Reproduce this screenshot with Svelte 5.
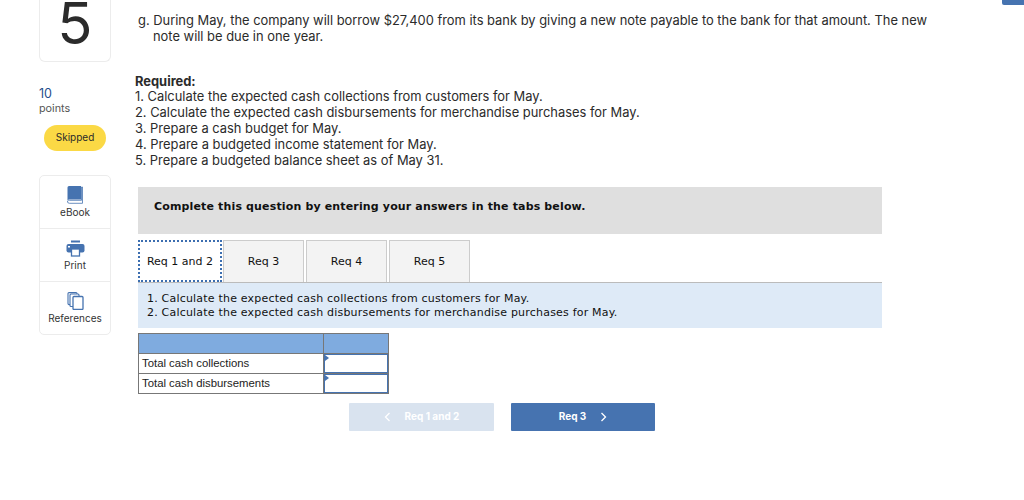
<script>
  const steps = [
    'Calculate the expected cash collections from customers for May.',
    'Calculate the expected cash disbursements for merchandise purchases for May.',
    'Prepare a cash budget for May.',
    'Prepare a budgeted income statement for May.',
    'Prepare a budgeted balance sheet as of May 31.'
  ];
  const tabs = ['Req 1 and 2', 'Req 3', 'Req 4', 'Req 5'];
</script>

<div class="page">
  <div class="corner"></div>
  <aside class="side">
    <div class="num">5</div>
    <div class="pts"><b>10</b><span>points</span></div>
    <div class="skip">Skipped</div>
    <div class="tools">
      <div class="tool">
        <svg width="18" height="18" viewBox="0 0 18 18"><path d="M1.500 1.500A1.500 1.500 0 0 1 3 0h12v13.500H3.500a2 2 0 0 0-2 1z" fill="#4673b0"/><path d="M1.500 15A2 2 0 0 1 3.500 14.300H15.500V1h1V17.300H3.500A2 2 0 0 1 1.500 15z" fill="none" stroke="#4673b0" stroke-width="0.800"/></svg>
        <span>eBook</span>
      </div>
      <div class="tool">
        <svg width="19" height="18" viewBox="0 0 19 18"><rect x="5" y="1.500" width="9" height="2" fill="#4673b0"/><rect x="0.500" y="5" width="18" height="8.500" rx="2" fill="#4673b0"/><rect x="5.500" y="10" width="8" height="7" fill="#fff" stroke="#4673b0" stroke-width="1.300"/><rect x="2" y="7" width="2" height="1.500" fill="#fff"/></svg>
        <span>Print</span>
      </div>
      <div class="tool">
        <svg width="17" height="18" viewBox="0 0 17 18" fill="#fff" stroke="#4673b0" stroke-width="1.100"><rect x="1" y="0.600" width="9" height="12" rx="1"/><rect x="3" y="2" width="9" height="12.500" rx="1"/><rect x="6" y="4.500" width="10" height="13" rx="1" stroke-width="1.300"/></svg>
        <span>References</span>
      </div>
    </div>
  </aside>

  <main class="main">
    <p class="g">g. During May, the company will borrow $27,400 from its bank by giving a new note payable to the bank for that amount. The new<br /><span class="ind">note will be due in one year.</span></p>
    <div class="req">
      <strong>Required:</strong>
      {#each steps as s, i}
        <div>{i + 1}. {s}</div>
      {/each}
    </div>

    <div class="work">
      <div class="banner">Complete this question by entering your answers in the tabs below.</div>
      <div class="tabs">
        {#each tabs as t, i}
          <div class="tab" class:active={i === 0}>{t}</div>
        {/each}
      </div>
      <div class="instr">
        <div>1. Calculate the expected cash collections from customers for May.</div>
        <div>2. Calculate the expected cash disbursements for merchandise purchases for May.</div>
      </div>
      <table>
        <tbody>
          <tr class="head"><td class="c1"></td><td class="c2"></td></tr>
          <tr><td class="c1">Total cash collections</td><td class="c2 input"></td></tr>
          <tr><td class="c1">Total cash disbursements</td><td class="c2 input"></td></tr>
        </tbody>
      </table>
      <div class="nav">
        <div class="btn off">
          <svg width="7" height="10" viewBox="0 0 7 10"><path d="M5.500 1L1.500 5l4 4" fill="none" stroke="#fff" stroke-width="1.300"/></svg>
          <span>Req 1 and 2</span>
        </div>
        <div class="btn on">
          <span>Req 3</span>
          <svg width="7" height="10" viewBox="0 0 7 10"><path d="M1.500 1l4 4-4 4" fill="none" stroke="#fff" stroke-width="1.300"/></svg>
        </div>
      </div>
    </div>
  </main>
</div>

<style>
  :global(body) { margin: 0; background: #fff; }
  .page {
    position: relative;
    display: flex;
    width: 1024px;
    height: 500px;
    overflow: hidden;
    font-family: "Inter", "Open Sans", sans-serif;
    color: #2b2b2b;
  }
  .corner {
    position: absolute;
    top: 0;
    right: 0;
    width: 22px;
    height: 5px;
    background: #4673b0;
    border-bottom-left-radius: 2px;
  }
  .side {
    width: 72px;
    margin-left: 39px;
    flex: none;
    display: flex;
    flex-direction: column;
  }
  .num {
    height: 62px;
    box-sizing: border-box;
    border: 1px solid #ececec;
    border-top: 0;
    border-radius: 0 0 6px 6px;
    text-align: center;
    font-size: 58px;
    font-weight: 400;
    line-height: 46px;
    color: #2b2b2b;
  }
  .pts { margin-top: 24px; display: flex; flex-direction: column; font-size: 10.800px; line-height: 15px; }
  .pts b { font-weight: 400; font-size: 12.500px; color: #1f4e8c; }
  .pts span { color: #555; }
  .skip {
    margin: 9px 0 0 5px;
    width: 62px;
    height: 26px;
    border-radius: 13px;
    background: #fbd945;
    font-size: 10px;
    line-height: 25px;
    text-align: center;
  }
  .tools {
    margin-top: 24px;
    border: 1px solid #ececec;
    border-radius: 5px;
    height: 160px;
    box-sizing: border-box;
    display: flex;
    flex-direction: column;
  }
  .tool {
    flex: 1;
    display: flex;
    flex-direction: column;
    align-items: center;
    gap: 2px;
    padding-top: 10px;
    font-size: 10px;
    line-height: 13px;
    color: #333;
  }
  .tool + .tool { border-top: 1px solid #ececec; }
  .main { margin-left: 24px; flex: 1; font-size: 12.900px; line-height: 15.800px; }
  .g { margin: 13px 0 0 3px; }
  .ind { margin-left: 15px; }
  .req { margin-top: 29px; }
  .req strong { font-weight: 700; display: block; }
  .work { margin: 18.600px 0 0 3px; width: 744px; font-family: "DejaVu Sans", sans-serif; color: #111; }
  .banner {
    height: 47px;
    box-sizing: border-box;
    padding: 12px 16px 0;
    background: #dfdfdf;
    font-size: 11px;
    letter-spacing: 0.150px;
    font-weight: 700;
    line-height: 15px;
  }
  .tabs { display: flex; gap: 2px; margin-top: 6px; height: 42px; border-bottom: 1px solid #bbb; }
  .tab {
    width: 81px;
    height: 42px;
    box-sizing: border-box;
    border: 1px solid #ccc;
    border-bottom: 0;
    background: #f3f3f3;
    text-align: center;
    font-size: 11px;
    line-height: 42px;
  }
  .tab.active {
    width: 84px;
    margin-right: -1px;
    background: #fff;
    border: 2px dotted #3c6eb0;
    line-height: 40px;
  }
  .instr {
    height: 45px;
    box-sizing: border-box;
    padding: 9px 9px 0;
    background: #deeaf7;
    font-size: 11px;
    letter-spacing: 0.200px;
    line-height: 14px;
  }
  table {
    margin-top: 5px;
    width: 251px;
    border-collapse: collapse;
    table-layout: fixed;
    font-family: "Liberation Sans", sans-serif;
    font-size: 11.350px;
    color: #222;
  }
  td { border: 1px solid #777; height: 19px; padding: 0 3px; line-height: 13px; }
  .c1 { width: 178px; }
  .head td { background: #7fabdf; }
  .input { position: relative; box-shadow: inset 0 0 0 1px #4673b0; }
  .input::before {
    content: "";
    position: absolute;
    left: 1px;
    top: 1px;
    border-left: 4px solid #4673b0;
    border-top: 3px solid transparent;
    border-bottom: 3px solid transparent;
  }
  .nav { display: flex; gap: 17px; margin: 9px 0 0 211px; }
  .btn {
    width: 145px;
    height: 28px;
    display: flex;
    align-items: center;
    justify-content: center;
    gap: 14px;
    border-radius: 1px;
    font-family: "Inter", sans-serif;
    font-size: 10px;
    font-weight: 700;
    color: #fff;
  }
  .btn.off { background: #d9e3ef; }
  .btn.on { background: #4673b0; width: 144px; }
</style>
